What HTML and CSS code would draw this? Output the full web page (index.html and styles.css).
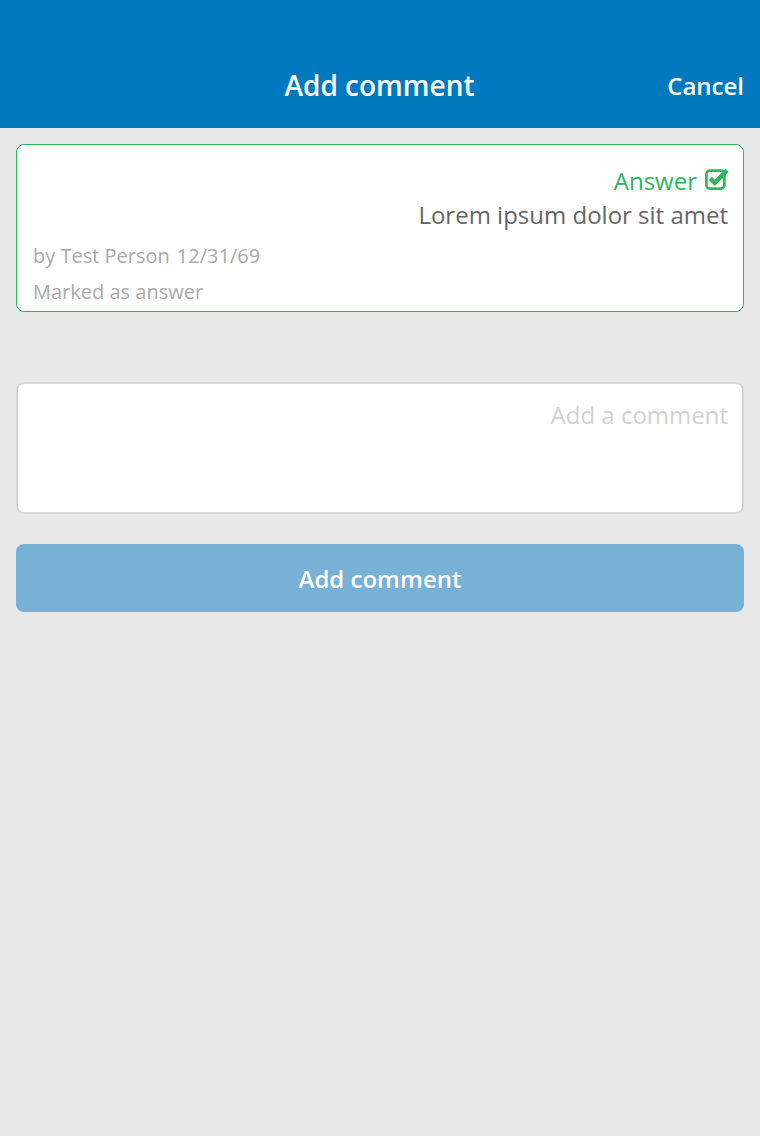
FILE: index.html
```html
<!DOCTYPE html>
<html>
<head>
<meta charset="utf-8">
<link rel="stylesheet" href="styles.css">
</head>
<body>
<header class="topbar">
  <div class="topbar-side"></div>
  <h1 class="topbar-title">Add comment</h1>
  <div class="topbar-side topbar-right"><span class="cancel">Cancel</span></div>
</header>
<main class="content">
  <section class="card">
    <div class="answer-row">
      <span class="answer-label">Answer</span>
      <svg class="answer-icon" viewBox="0 0 24 24" width="24" height="24" aria-hidden="true">
        <rect x="1.4" y="3.6" width="18" height="18" rx="3.4" fill="none" stroke="#2db65a" stroke-width="2.6"/>
        <path d="M5.4 11.4 L9.8 15.8 L22.2 3.4" fill="none" stroke="#2db65a" stroke-width="4.4" stroke-linecap="butt" stroke-linejoin="miter"/>
      </svg>
    </div>
    <p class="comment-text">Lorem ipsum dolor sit amet</p>
    <div class="meta meta-first"><span>by Test Person</span><span>12/31/69</span></div>
    <div class="meta">Marked as answer</div>
  </section>
  <textarea class="comment-input" placeholder="Add a comment"></textarea>
  <button class="submit-btn" type="button">Add comment</button>
</main>
</body>
</html>
```
FILE: styles.css
```css
html, body {
  margin: 0;
  padding: 0;
}
body {
  background: #e8e8e8;
  font-family: "Open Sans", "Noto Sans", sans-serif;
  width: 760px;
  min-height: 1136px;
}
.topbar {
  background: #0079be;
  height: 128px;
  box-sizing: border-box;
  padding: 40px 17px 0 16px;
  display: grid;
  grid-template-columns: 1fr auto 1fr;
  align-items: center;
}
.topbar-title {
  margin: 0;
  color: #fff;
  font-size: 28px;
  font-weight: 600;
  line-height: 36px;
  position: relative;
  top: 1px;
}
.topbar-right {
  display: flex;
  justify-content: flex-end;
}
.cancel {
  color: #fff;
  font-size: 24px;
  font-weight: 600;
  line-height: 32px;
  position: relative;
  top: 2px;
  left: 1px;
}
.content {
  padding: 16px;
  display: flex;
  flex-direction: column;
}
.card {
  background: #fff;
  border: 1px solid #2db65a;
  border-radius: 8px;
  padding: 19px 15px 1px 16px;
  display: flex;
  flex-direction: column;
}
.answer-row {
  display: flex;
  justify-content: flex-end;
  align-items: center;
  gap: 7px;
  height: 34px;
}
.answer-label {
  color: #2db65a;
  font-size: 24px;
  line-height: 34px;
}
.answer-icon {
  display: block;
  position: relative;
  top: -2px;
  left: 1px;
}
.comment-text {
  margin: 0;
  text-align: right;
  color: #666;
  font-size: 24px;
  line-height: 34px;
}
.meta {
  color: #aaa;
  font-size: 20px;
  line-height: 36px;
  display: flex;
  gap: 7px;
}
.meta-first {
  margin-top: 6px;
}
.comment-input {
  margin-top: 70px;
  height: 132px;
  box-sizing: border-box;
  width: 100%;
  border: 2px solid #d6d6d6;
  border-radius: 8px;
  background: #fff;
  padding: 14px 14px;
  font-family: "Open Sans", "Noto Sans", sans-serif;
  font-size: 24px;
  line-height: 34px;
  text-align: right;
  color: #666;
  resize: none;
  outline: none;
}
.comment-input::placeholder {
  color: #d2d2d2;
}
.submit-btn {
  margin-top: 30px;
  height: 68px;
  border: none;
  border-radius: 8px;
  background: #77b1d5;
  color: #fff;
  font-family: "Open Sans", "Noto Sans", sans-serif;
  font-size: 24px;
  font-weight: 600;
  padding: 0;
}
```
